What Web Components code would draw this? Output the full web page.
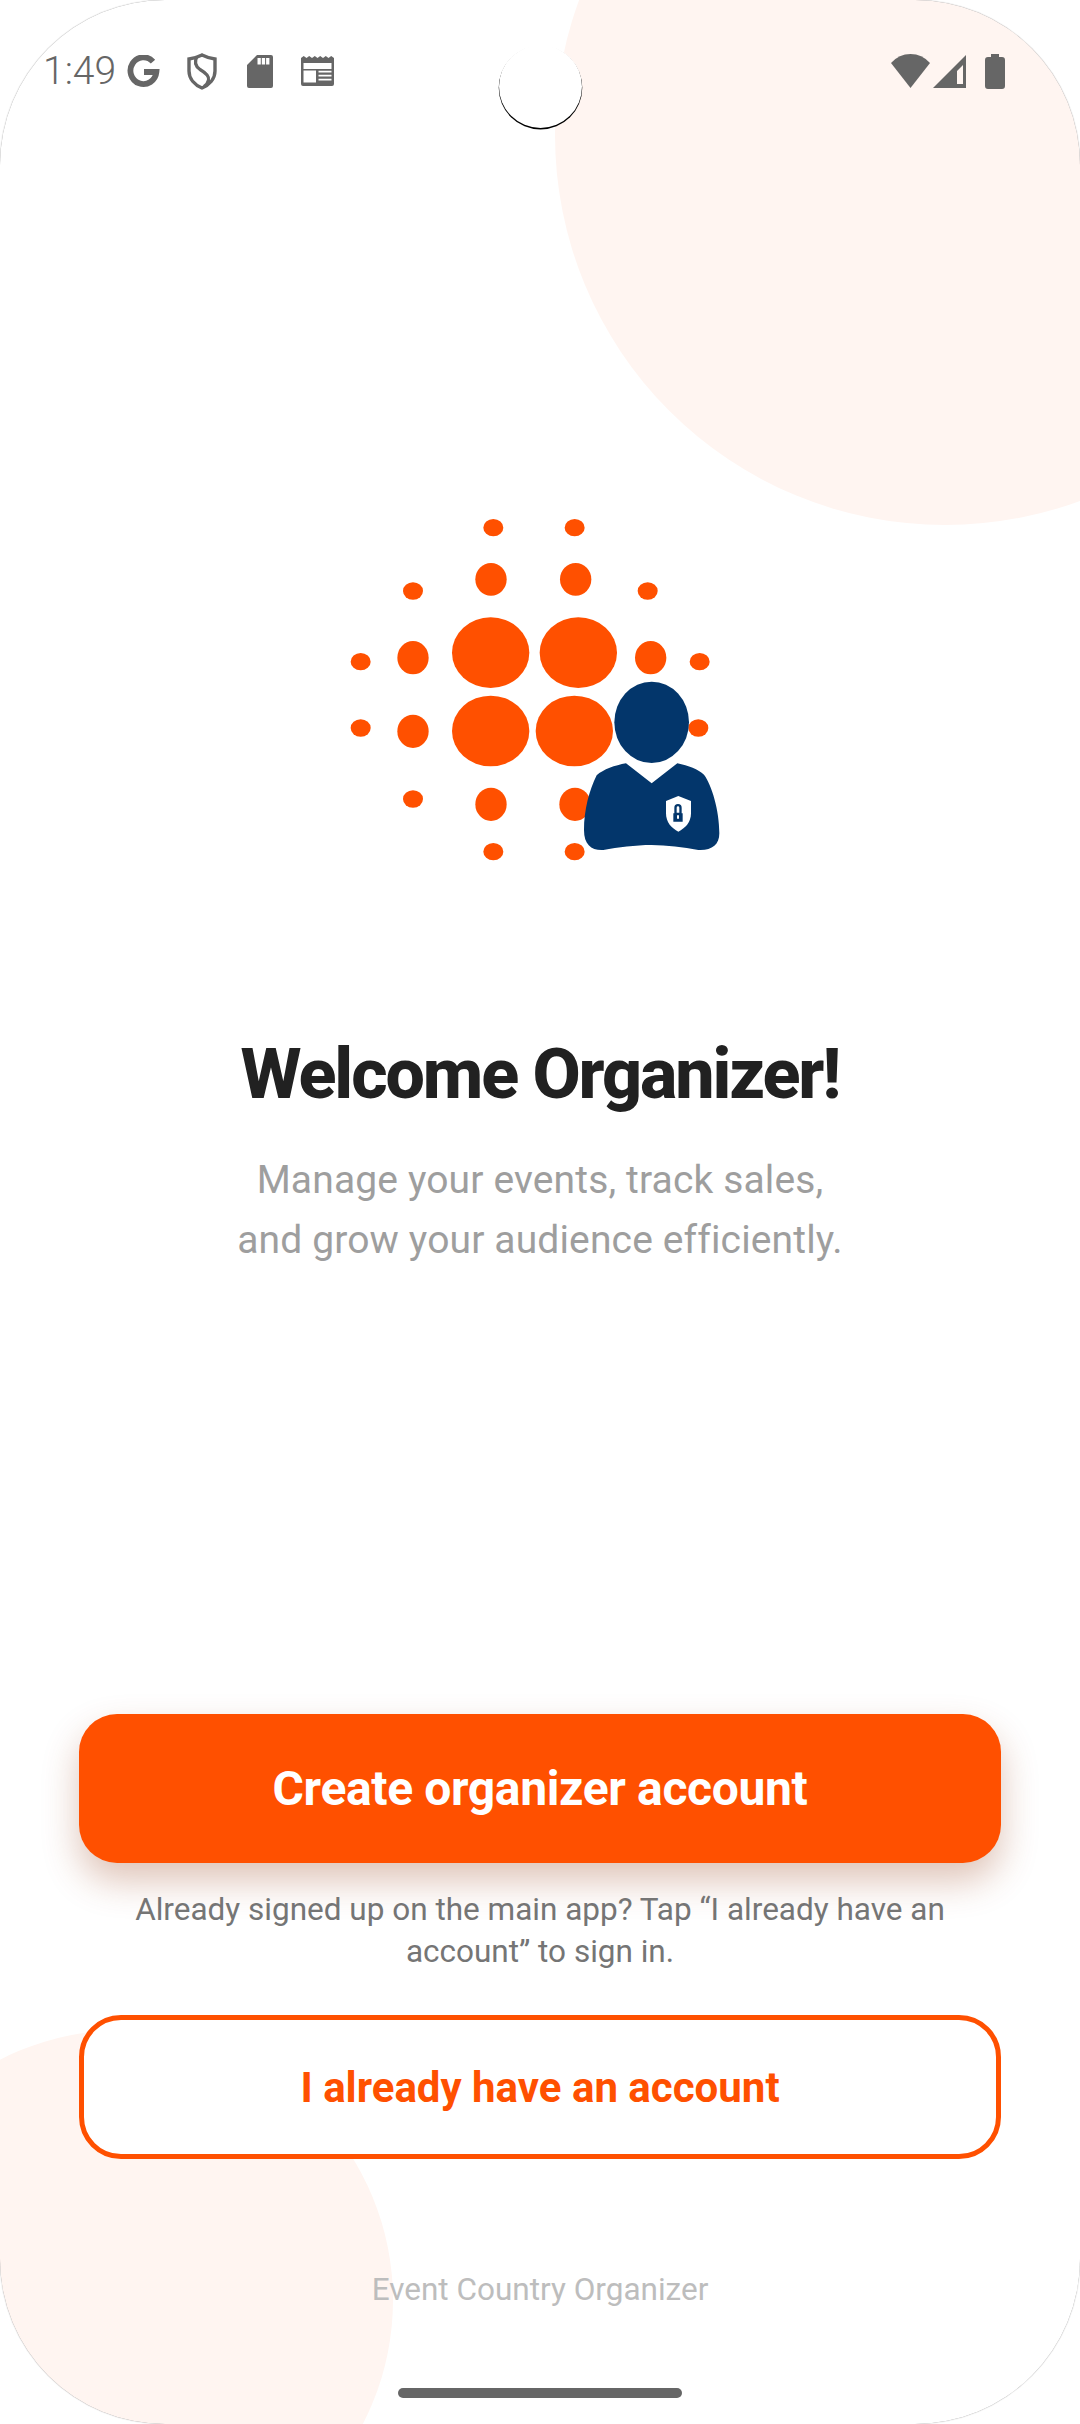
<!DOCTYPE html>
<html lang="en">
<head>
<meta charset="utf-8">
<title>Event Country Organizer</title>
<style>
html, body { margin: 0; background: #fff; }
body { font-family: Roboto, "Noto Sans", sans-serif; }
</style>
</head>
<body>
<app-screen>
  <status-bar slot="top"></status-bar>
  <brand-logo></brand-logo>
  <welcome-text>
    <span slot="title">Welcome Organizer!</span>
    Manage your events, track sales,<br>and grow your audience efficiently.
  </welcome-text>
  <action-button slot="actions" variant="filled">Create organizer account</action-button>
  <hint-text slot="actions">Already signed up on the main app? Tap “I already have an account” to sign in.</hint-text>
  <action-button slot="actions" variant="outline">I already have an account</action-button>
  <app-footer slot="bottom">Event Country Organizer</app-footer>
  <home-indicator slot="bottom"></home-indicator>
</app-screen>

<script>
// petit helper pour eviter de repeter le shadow root partout
class BaseEl extends HTMLElement {
  constructor() {
    super();
    this.attachShadow({ mode: "open" });
    this.shadowRoot.innerHTML = this.constructor.markup;
  }
}

class AppScreen extends BaseEl {
  static markup = /*html*/`
  <style>
    :host {
      display: block;
      position: relative;
      width: 1080px;
      height: 2424px;
      overflow: hidden;
    }
    #frame {
      position: relative;
      width: 100%;
      height: 100%;
      box-sizing: border-box;
      display: flex;
      flex-direction: column;
      background: #fff;
      border-radius: 165px;
      overflow: hidden;
    }
    #line {
      position: absolute;
      inset: 0;
      border-radius: 165px;
      box-shadow: 0 0 1px rgba(0, 0, 0, .5);
      pointer-events: none;
    }
    .blob {
      position: absolute;
      border-radius: 50%;
      background: #fff5f1;
    }
    #blob-top { left: 555px; top: -255px; width: 780px; height: 780px; }
    #blob-bottom { left: -147px; top: 2030px; width: 540px; height: 540px; }
    #top, main, #actions, #bottom { position: relative; }
    main {
      flex: 1;
      display: flex;
      flex-direction: column;
      align-items: center;
      padding-top: 358px;
    }
    #actions {
      display: flex;
      flex-direction: column;
      padding: 0 79px;
    }
    #bottom {
      display: flex;
      flex-direction: column;
      align-items: center;
    }
  </style>
  <div id="frame">
    <div class="blob" id="blob-top"></div>
    <div class="blob" id="blob-bottom"></div>
    <div id="top"><slot name="top"></slot></div>
    <main><slot></slot></main>
    <div id="actions"><slot name="actions"></slot></div>
    <div id="bottom"><slot name="bottom"></slot></div>
  </div>
  <div id="line"></div>`;
}

class StatusBar extends BaseEl {
  static markup = /*html*/`
  <style>
    :host { display: block; position: relative; height: 142px; }
    #bar {
      height: 100%;
      display: flex;
      align-items: center;
      padding: 0 75px 0 43px;
      color: #666;
    }
    #time { font-size: 39px; font-weight: 300; width: 71.5px; }
    .slot { width: 58px; display: flex; justify-content: center; }
    svg { display: block; fill: #666; }
    #right { margin-left: auto; display: flex; align-items: center; }
    #cam {
      position: absolute;
      left: 499px;
      top: 45px;
      width: 83px;
      height: 83px;
      border-radius: 50%;
      background: #fff;
      box-shadow: 0 1.2px 0 .3px #000;
    }
  </style>
  <div id="bar">
    <span id="time">1:49</span>
    <span class="slot">
      <svg width="33" height="33" viewBox="0 0 33 33"><path d="M26 6.6 A13 13.4 0 1 0 29.4 17 H17" fill="none" stroke="#666" stroke-width="5.8"/></svg>
    </span>
    <span class="slot">
      <svg width="30" height="37" viewBox="0 0 30 37"><path d="M15 2 C19 4 23 5.5 28 6 V18 C28 26 22 32 15 35 C8 32 2 26 2 18 V6 C7 5.5 11 4 15 2 Z" fill="none" stroke="#666" stroke-width="3.4"/><path d="M10 3.5 C7 9 8 13 13 16.5 C19 20 22.5 23 21.5 27 C21 30 19 32 17 33.5" fill="none" stroke="#666" stroke-width="3.2"/></svg>
    </span>
    <span class="slot">
      <svg width="26" height="33" viewBox="0 0 26 33"><path d="M10 0 H24 a2 2 0 0 1 2 2 V31 a2 2 0 0 1 -2 2 H2 a2 2 0 0 1 -2 -2 V10 Z M10.5 3 V9.5 H13.8 V3 Z M14.8 3 V9.5 H18.1 V3 Z M19.1 3 V9.5 H22.4 V3 Z" fill-rule="evenodd"/></svg>
    </span>
    <span class="slot">
      <svg width="33" height="30" viewBox="0 0 33 30"><path d="M0 2 L2.7 0 L5.5 2 L8.2 0 L11 2 L13.8 0 L16.5 2 L19.2 0 L22 2 L24.8 0 L27.5 2 L30.2 0 L33 2 V28 a2 2 0 0 1 -2 2 H2 a2 2 0 0 1 -2 -2 Z M2.5 7 V13 H30.5 V7 Z M2.5 14.5 V26.5 H15 V14.5 Z M17.5 14.8 V16.6 H30.5 V14.8 Z M17.5 18.8 V20.6 H30.5 V18.8 Z M17.5 22.8 V24.6 H30.5 V22.8 Z" fill-rule="evenodd"/></svg>
    </span>
    <div id="right">
      <svg width="39" height="34" viewBox="0 0 39 34"><path d="M19.5 34 L0 9 Q8 0 19.5 0 Q31 0 39 9 Z"/></svg>
      <svg style="margin-left:3px" width="33" height="33" viewBox="0 0 33 33"><path d="M33 0 V33 H0 Z M24 16 L30 10 V29 H24 Z" fill-rule="evenodd"/></svg>
      <svg style="margin-left:19px" width="20" height="35" viewBox="0 0 20 35"><path d="M6 0 H14 V3 H17 a3 3 0 0 1 3 3 V32 a3 3 0 0 1 -3 3 H3 a3 3 0 0 1 -3 -3 V6 a3 3 0 0 1 3 -3 H6 Z"/></svg>
    </div>
  </div>
  <div id="cam"></div>`;
}

class BrandLogo extends BaseEl {
  static markup = /*html*/`
  <style>
    :host { display: block; width: 420px; height: 380px; }
    svg { display: block; }
  </style>
  <svg width="420" height="380" viewBox="0 0 1260 1140">
    <g fill="#ff5000">
      <ellipse cx="490" cy="83" rx="30" ry="26"/><ellipse cx="734" cy="83" rx="30" ry="26"/>
      <ellipse cx="483" cy="238" rx="47" ry="49"/><ellipse cx="737" cy="238" rx="47" ry="49"/>
      <ellipse cx="249" cy="273" rx="30" ry="26"/><ellipse cx="953" cy="273" rx="30" ry="26"/>
      <ellipse cx="482" cy="458" rx="116" ry="106"/><ellipse cx="745" cy="458" rx="116" ry="106"/>
      <ellipse cx="482" cy="693" rx="116" ry="106"/><ellipse cx="733" cy="693" rx="116" ry="106"/>
      <ellipse cx="249" cy="473" rx="47" ry="50"/><ellipse cx="962" cy="473" rx="47" ry="50"/>
      <ellipse cx="92" cy="485" rx="30" ry="26"/><ellipse cx="1109" cy="485" rx="30" ry="26"/>
      <ellipse cx="92" cy="684" rx="30" ry="26"/><ellipse cx="1105" cy="684" rx="30" ry="26"/>
      <ellipse cx="249" cy="694" rx="47" ry="50"/>
      <ellipse cx="249" cy="897" rx="30" ry="26"/>
      <ellipse cx="483" cy="913" rx="47" ry="50"/><ellipse cx="735" cy="913" rx="47" ry="50"/>
      <ellipse cx="490" cy="1055" rx="30" ry="26"/><ellipse cx="734" cy="1055" rx="30" ry="26"/>
    </g>
    <g fill="#03366b">
      <ellipse cx="965" cy="667" rx="112" ry="122"/>
      <path d="M888 790 L965 850 L1042 790 C1075 797 1105 808 1122 824 C1145 855 1168 930 1168 1000 C1168 1035 1145 1052 1105 1050 C1060 1042 1010 1035 965 1035 C915 1035 865 1042 820 1050 C785 1052 762 1035 762 990 C762 930 778 870 800 826 C820 808 855 796 888 790 Z"/>
    </g>
    <path d="M1045 888 L1083 903 V940 C1083 968 1065 985 1045 995 C1025 985 1008 968 1008 940 V903 Z" fill="#fff"/>
    <path d="M1033 940 V923 a11 11 0 0 1 22 0 V940 H1058 V965 H1030 V940 Z M1040 938 H1048 V923 a4 4 0 0 0 -8 0 Z M1041 946 V956 H1047 V946 Z" fill="#03366b" fill-rule="evenodd"/>
  </svg>`;
}

class WelcomeText extends BaseEl {
  static markup = /*html*/`
  <style>
    :host { display: block; text-align: center; margin-top: 152px; }
    h1 {
      margin: 0;
      font-size: 70px;
      line-height: 84px;
      font-weight: 800;
      letter-spacing: -2.1px;
      color: #212121;
    }
    p {
      margin: 34px 0 0;
      font-size: 39px;
      line-height: 60px;
      letter-spacing: .14px;
      color: #9e9e9e;
    }
  </style>
  <h1><slot name="title"></slot></h1>
  <p><slot></slot></p>`;
}

class ActionButton extends BaseEl {
  static markup = /*html*/`
  <style>
    :host { display: block; }
    button {
      all: unset;
      box-sizing: border-box;
      display: flex;
      width: 100%;
      align-items: center;
      justify-content: center;
      font-family: Roboto, sans-serif;
      cursor: pointer;
    }
    :host([variant="filled"]) button {
      height: 149px;
      border-radius: 38px;
      background: #ff5000;
      color: #fff;
      font-size: 48px;
      font-weight: 700;
      letter-spacing: -.36px;
      box-shadow: 0 18px 36px rgba(150, 60, 20, .3);
    }
    :host([variant="outline"]) button {
      height: 144px;
      border-radius: 42px;
      border: 5px solid #ff5000;
      background: #fff;
      color: #ff5000;
      font-size: 42px;
      font-weight: 700;
    }
  </style>
  <button><slot></slot></button>`;
}

class HintText extends BaseEl {
  static markup = /*html*/`
  <style>
    :host {
      display: block;
      text-align: center;
      margin: 26px 0 42px;
      padding: 0 30px;
      font-size: 31.5px;
      line-height: 42px;
      color: #757575;
    }
  </style>
  <slot></slot>`;
}

class AppFooter extends BaseEl {
  static markup = /*html*/`
  <style>
    :host {
      display: block;
      margin-top: 110px;
      font-size: 31.5px;
      line-height: 42px;
      color: #bdbdbd;
    }
  </style>
  <slot></slot>`;
}

class HomeIndicator extends BaseEl {
  static markup = /*html*/`
  <style>
    :host {
      display: block;
      width: 284px;
      height: 10px;
      margin: 77px 0 26px;
      border-radius: 5px;
      background: #666;
    }
  </style>`;
}

customElements.define("app-screen", AppScreen);
customElements.define("status-bar", StatusBar);
customElements.define("brand-logo", BrandLogo);
customElements.define("welcome-text", WelcomeText);
customElements.define("action-button", ActionButton);
customElements.define("hint-text", HintText);
customElements.define("app-footer", AppFooter);
customElements.define("home-indicator", HomeIndicator);
</script>
</body>
</html>
